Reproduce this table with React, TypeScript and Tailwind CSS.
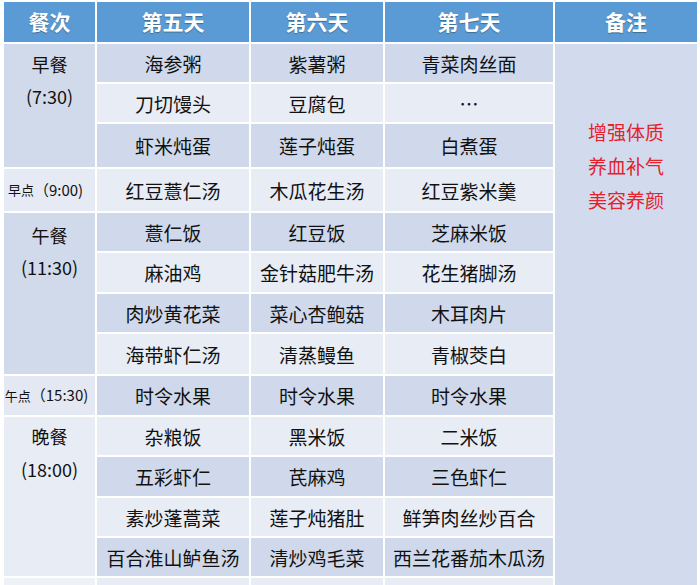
import React from "react";

const DISHES: string[][] = [
  ["海参粥", "紫薯粥", "青菜肉丝面"],
  ["刀切馒头", "豆腐包", "…"],
  ["虾米炖蛋", "莲子炖蛋", "白煮蛋"],
  ["红豆薏仁汤", "木瓜花生汤", "红豆紫米羹"],
  ["薏仁饭", "红豆饭", "芝麻米饭"],
  ["麻油鸡", "金针菇肥牛汤", "花生猪脚汤"],
  ["肉炒黄花菜", "菜心杏鲍菇", "木耳肉片"],
  ["海带虾仁汤", "清蒸鳗鱼", "青椒茭白"],
  ["时令水果", "时令水果", "时令水果"],
  ["杂粮饭", "黑米饭", "二米饭"],
  ["五彩虾仁", "芪麻鸡", "三色虾仁"],
  ["素炒蓬蒿菜", "莲子炖猪肚", "鲜笋肉丝炒百合"],
  ["百合淮山鲈鱼汤", "清炒鸡毛菜", "西兰花番茄木瓜汤"],
  ["", "", ""],
];

const HEADERS = ["餐次", "第五天", "第六天", "第七天", "备注"];

const COL_START = ["col-start-2", "col-start-3", "col-start-4"];
const ROW_START = [
  "row-start-2",
  "row-start-3",
  "row-start-4",
  "row-start-5",
  "row-start-6",
  "row-start-7",
  "row-start-8",
  "row-start-9",
  "row-start-10",
  "row-start-11",
  "row-start-12",
  "row-start-13",
  "row-start-14",
  "row-start-15",
];

export default function App() {
  return (
    <div
      className="h-[585px] w-[700px] overflow-hidden bg-white pl-[4px] pt-[2px] text-[#111]"
      style={{ fontFamily: '"Noto Sans CJK SC", "Noto Sans", sans-serif' }}
    >
      <div className="grid w-[693px] grid-cols-[91px_152px_132px_168px_142px] grid-rows-[40px_38px_38px_43px_42px_38px_39px_38px_40px_39px_38px_39px_38px_38px_40px] gap-[2px]">
        {/* header */}
        {HEADERS.map((h) => (
          <div
            key={h}
            className="row-start-1 flex items-center justify-center bg-[#5b9bd5] text-[21px] font-bold text-white [text-shadow:0_1px_1px_rgba(0,0,0,0.3)]"
          >
            {h}
          </div>
        ))}

        {/* meal labels */}
        <div className="col-start-1 row-start-2 row-span-3 flex flex-col items-center bg-[#d1daeb] pt-[4px] text-[18px] leading-[32px]">
          <span>早餐</span>
          <span>(7:30)</span>
        </div>
        <div className="col-start-1 row-start-5 flex items-center justify-center bg-[#e6eaf4] pr-[8px]">
          <span className="text-[13px]">早点</span>
          <span className="text-[15px]">（9:00)</span>
        </div>
        <div className="col-start-1 row-start-6 row-span-4 flex flex-col items-center bg-[#d1daeb] pt-[6px] text-[18px] leading-[32px]">
          <span>午餐</span>
          <span>(11:30)</span>
        </div>
        <div className="col-start-1 row-start-10 flex items-center justify-center bg-[#e3e8f2] pr-[6px]">
          <span className="text-[13px]">午点</span>
          <span className="text-[15px]">（15:30)</span>
        </div>
        <div className="col-start-1 row-start-11 row-span-4 flex flex-col items-center bg-[#e8ecf5] pt-[3px] text-[18px] leading-[33px]">
          <span>晚餐</span>
          <span>(18:00)</span>
        </div>
        <div className="col-start-1 row-start-15 bg-[#eef1f7]" />

        {/* dishes */}
        {DISHES.map((row, r) =>
          row.map((dish, c) => (
            <div
              key={`${r}-${c}`}
              className={[
                "flex items-center justify-center pt-[2px] text-[19px]",
                COL_START[c],
                ROW_START[r],
                r % 2 === 0 ? "bg-[#cfd9eb]" : "bg-[#e8ecf5]",
              ].join(" ")}
            >
              {dish}
            </div>
          ))
        )}

        {/* notes */}
        <div className="col-start-5 row-start-2 row-span-14 flex flex-col items-center bg-[#d2dbee] pt-[71px] text-[19px] leading-[34px] text-[#e5212b]">
          <span>增强体质</span>
          <span>养血补气</span>
          <span>美容养颜</span>
        </div>
      </div>
    </div>
  );
}
